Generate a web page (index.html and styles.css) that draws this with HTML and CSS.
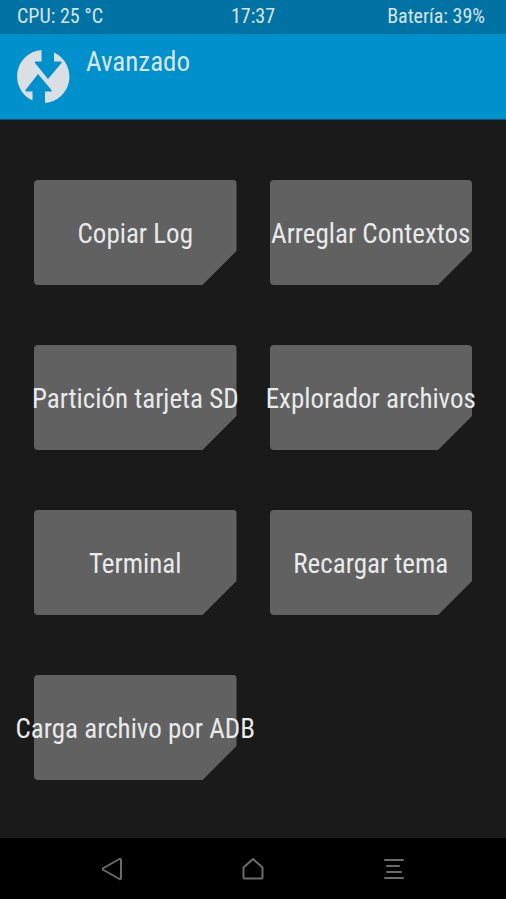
FILE: index.html
```html
<!DOCTYPE html>
<html lang="es">
<head>
<meta charset="utf-8">
<meta name="viewport" content="width=device-width, initial-scale=1">
<title>Avanzado</title>
<link rel="stylesheet" href="styles.css">
</head>
<body>
<div class="status">
  <span>CPU: 25 °C</span>
  <span class="clock">17:37</span>
  <span class="battery">Batería: 39%</span>
</div>
<header class="header">
  <svg class="logo" viewBox="0 0 53 53" aria-hidden="true">
    <path d="M24.500 0V11.500H18V13L31 29L44.500 13V11.500H37V2.500A26.500 26.500 0 0 1 28 53V41.500H34.500V40L21 24L8.500 40V41.500H15.500V50.500A26.500 26.500 0 0 1 24.500 0Z"/>
  </svg>
  <h1 class="title">Avanzado</h1>
</header>
<main class="actions">
  <button class="action" type="button"><span>Copiar Log</span></button>
  <button class="action" type="button"><span>Arreglar Contextos</span></button>
  <button class="action" type="button"><span>Partición tarjeta SD</span></button>
  <button class="action" type="button"><span>Explorador archivos</span></button>
  <button class="action" type="button"><span>Terminal</span></button>
  <button class="action" type="button"><span>Recargar tema</span></button>
  <button class="action" type="button"><span>Carga archivo por ADB</span></button>
</main>
<nav class="nav">
  <button class="key" type="button" aria-label="Atrás">
    <svg viewBox="0 0 24 24"><path d="M21 3Q21 1.500 19.500 2L3.500 11Q2 12 3.500 13L19.500 22Q21 22.500 21 21Z"/></svg>
  </button>
  <button class="key" type="button" aria-label="Inicio">
    <svg viewBox="0 0 24 24"><path d="M12 2L21.500 10.500V20.500Q21.500 21.500 20.500 21.500H3.500Q2.500 21.500 2.500 20.500V10.500Z"/></svg>
  </button>
  <button class="key" type="button" aria-label="Consola">
    <svg viewBox="0 0 24 24"><path d="M3 3H21M5 9H17M5 15H19M3 21H21"/></svg>
  </button>
</nav>
</body>
</html>
```
FILE: styles.css
```css
* { box-sizing: border-box; }

body {
  display: flex;
  flex-direction: column;
  min-height: 100vh;
  margin: 0;
  background: #1a1a1a;
  color: #e8eaeb;
  font-family: "Roboto Condensed", Roboto, sans-serif;
  font-size: 27px;
}

button {
  padding: 0;
  border: 0;
  background: none;
  color: inherit;
  font: inherit;
  cursor: pointer;
}

.status {
  display: grid;
  grid-template-columns: 1fr auto 1fr;
  align-items: center;
  height: 34px;
  padding: 0 17px 2px;
  background: #0073a4;
  color: #dbe3e7;
  font-size: 20px;
}

.battery {
  padding-right: 4px;
  text-align: right;
}

.header {
  display: flex;
  gap: 16px;
  height: 86px;
  padding: 16px 17px;
  background: #0090cb;
  border-bottom: 1px solid #0a5474;
}

.logo {
  width: 53px;
  height: 53px;
  fill: #d9dfe2;
}

.title {
  margin: 0;
  color: #dbe5ea;
  font-size: 27px;
  font-weight: 400;
  line-height: 24px;
}

.actions {
  flex: 1;
  display: grid;
  grid-template-columns: 1fr 1fr;
  grid-auto-rows: 105px;
  gap: 60px 33px;
  padding: 60px 34px 58px;
}

.action {
  position: relative;
  display: flex;
  align-items: center;
  justify-content: center;
  min-width: 0;
  padding-top: 2px;
  white-space: nowrap;
}

.action::before {
  content: "";
  position: absolute;
  inset: 0;
  border-radius: 4px;
  background: #616161;
  clip-path: polygon(0 0, 100% 0, 100% calc(100% - 34px), calc(100% - 34px) 100%, 0 100%);
}

.action span { position: relative; }

.nav {
  display: grid;
  grid-template-columns: repeat(3, 1fr);
  height: 61px;
  padding: 0 42px;
  background: #000;
}

.key {
  display: flex;
  align-items: center;
  justify-content: center;
}

.key svg {
  width: 24px;
  height: 24px;
  fill: none;
  stroke: #6b6b6b;
  stroke-width: 2;
  stroke-linecap: round;
  stroke-linejoin: round;
}
```
